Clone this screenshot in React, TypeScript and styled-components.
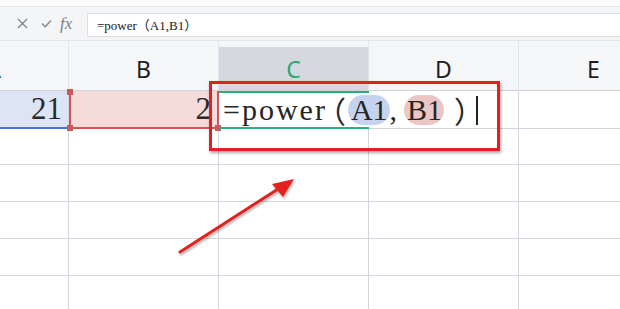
import React from 'react';
import styled, { createGlobalStyle } from 'styled-components';

const GlobalStyle = createGlobalStyle`
    body {
        margin: 0;
        background: #ffffff;
        font-family: "Noto Sans", "Liberation Sans", sans-serif;
    }
`;

const Page = styled.div`
    position: relative;
    width: 620px;
    height: 309px;
    overflow: hidden;
    background: #ffffff;
`;

const TopStrip = styled.div`
    height: 6px;
    background: #fbfbfc;
    border-bottom: 1px solid #e6e8eb;
`;

const FormulaBar = styled.div`
    display: flex;
    align-items: center;
    height: 33px;
    background: #f4f5f7;
    padding-left: 10px;
    box-sizing: border-box;
`;

const BarIcon = styled.span`
    display: flex;
    width: 24px;
    justify-content: center;
    color: #8a8d93;
`;

const FxLabel = styled.span`
    width: 20px;
    margin-left: 2px;
    font-family: "Liberation Serif", serif;
    font-style: italic;
    font-size: 17px;
    color: #7d8087;
`;

const FormulaInput = styled.div`
    flex: 1;
    height: 22px;
    margin-left: 7px;
    margin-top: 2px;
    background: #ffffff;
    border: 1px solid #dcdfe4;
    border-right: none;
    padding-left: 9px;
    display: flex;
    align-items: center;
    font-family: "Liberation Serif", "Noto Sans CJK SC", serif;
    font-size: 13px;
    color: #222;
`;

const Sheet = styled.div`
    display: grid;
    grid-template-columns: repeat(5, 150px);
    grid-template-rows: 51px 38px 36px 37px 37px 37px 37px;
    margin-left: -81px;
`;

const HeaderCell = styled.div<{ $active?: boolean }>`
    display: flex;
    align-items: center;
    justify-content: center;
    padding-top: 6px;
    box-sizing: border-box;
    font-size: 23px;
    color: ${p => (p.$active ? '#2aa873' : '#1d1d1f')};
    background: ${p =>
        p.$active
            ? 'linear-gradient(#f5f6f8 0 6px, #d5d8de 6px)'
            : '#f5f6f8'};
    border-top: 1px solid #e3e5e9;
    border-bottom: 1px solid #cfd2d8;
    border-right: 1px solid #e3e5ea;
`;

const Cell = styled.div`
    border-right: 1px solid #d3d6dc;
    border-bottom: 1px solid #d3d6dc;
    box-sizing: border-box;
`;

const ValueCell = styled.div<{ $tone: 'blue' | 'red' }>`
    position: relative;
    display: flex;
    align-items: center;
    justify-content: flex-end;
    padding-right: 6px;
    box-sizing: border-box;
    font-family: "Liberation Serif", serif;
    font-size: 31px;
    color: #2a2a2a;
    background: ${p => (p.$tone === 'blue' ? '#dde4f3' : '#f5dcdb')};
    border-bottom: 2px solid ${p => (p.$tone === 'blue' ? '#4b73cf' : '#cf5656')};
    border-left: ${p => (p.$tone === 'red' ? '2px solid #cf5656' : 'none')};
    border-right: ${p => (p.$tone === 'red' ? '2px solid #cf5656' : '1px solid #d3d6dc')};
`;

const Handle = styled.span<{ $side: 'left' | 'right'; $top?: boolean }>`
    position: absolute;
    width: 6px;
    height: 6px;
    background: #c85a5a;
    ${p => (p.$side === 'left' ? 'left: -4px;' : 'right: -4px;')}
    ${p => (p.$top ? 'top: -2px;' : 'bottom: -4px;')}
`;

const EditCell = styled.div`
    position: relative;
    border-top: 2px solid #2fae7c;
    border-bottom: 2px solid #2fae7c;
    box-sizing: border-box;
    overflow: visible;
    z-index: 2;
`;

const FormulaText = styled.div`
    position: absolute;
    left: 4px;
    top: 1px;
    display: flex;
    align-items: center;
    height: 32px;
    white-space: nowrap;
    font-family: "Liberation Serif", "Noto Sans CJK SC", serif;
    font-size: 30px;
    letter-spacing: 2px;
    color: #262626;
`;

/* full-width bracket, clipped to the part of its em box that holds the stroke */
const Paren = styled.span<{ $w: number; $open?: boolean; $pad: number }>`
    display: inline-flex;
    width: ${p => p.$w}px;
    overflow: hidden;
    box-sizing: border-box;
    letter-spacing: 0;
    justify-content: ${p => (p.$open ? 'flex-end' : 'flex-start')};
    ${p => (p.$open ? `padding-right: ${p.$pad}px;` : `padding-left: ${p.$pad}px;`)}
`;

const Ref = styled.span<{ $tone: 'blue' | 'red' }>`
    display: inline-flex;
    align-items: center;
    height: 30px;
    padding: 0 2px 0 3px;
    border-radius: 15px;
    letter-spacing: 0;
    background: ${p => (p.$tone === 'blue' ? '#c6d3ef' : '#ecc6c4')};
`;

const Gap = styled.span<{ $w: number }>`
    display: inline-block;
    width: ${p => p.$w}px;
`;

const Caret = styled.span`
    display: inline-block;
    width: 1.5px;
    height: 29px;
    background: #222;
`;

const Highlight = styled.div`
    position: absolute;
    left: 209px;
    top: 81px;
    width: 291px;
    height: 70px;
    box-sizing: border-box;
    border: 3px solid #e2201f;
    box-shadow: 1px 2px 3px rgba(0, 0, 0, 0.35);
    z-index: 5;
`;

const Arrow = styled.svg`
    position: absolute;
    left: 0;
    top: 0;
    z-index: 5;
`;

const columns = ['A', 'B', 'C', 'D', 'E'];

function App() {
    const emptyRows = [0, 1, 2, 3, 4];
    return (
        <Page>
            <GlobalStyle />
            <TopStrip />
            <FormulaBar>
                <BarIcon>
                    <svg width="11" height="11" viewBox="0 0 11 11">
                        <path d="M1 1 L10 10 M10 1 L1 10" stroke="#7f838a" strokeWidth="1.3" />
                    </svg>
                </BarIcon>
                <BarIcon>
                    <svg width="11" height="9" viewBox="0 0 11 9">
                        <path d="M1 4.5 L4.2 7.8 L10 1.5" stroke="#7f838a" strokeWidth="1.3" fill="none" />
                    </svg>
                </BarIcon>
                <FxLabel>fx</FxLabel>
                <FormulaInput>=power（A1,B1）</FormulaInput>
            </FormulaBar>
            <Sheet>
                {columns.map(c => (
                    <HeaderCell key={c} $active={c === 'C'}>{c}</HeaderCell>
                ))}
                <ValueCell $tone="blue">21</ValueCell>
                <ValueCell $tone="red">
                    2
                    <Handle $side="left" $top />
                    <Handle $side="left" />
                    <Handle $side="right" />
                </ValueCell>
                <EditCell>
                    <FormulaText>
                        =power<Paren $w={21} $open $pad={2}>（</Paren>
                        <Ref $tone="blue">A1</Ref>,<Gap $w={5} />
                        <Ref $tone="red">B1</Ref>
                        <Paren $w={32} $pad={10}>）</Paren>
                        <Caret />
                    </FormulaText>
                </EditCell>
                <Cell />
                <Cell />
                {emptyRows.map(r =>
                    columns.map(c => <Cell key={`${c}${r}`} />)
                )}
            </Sheet>
            <Highlight />
            <Arrow width="620" height="309">
                <defs>
                    <filter id="sh" x="-10%" y="-10%" width="130%" height="130%">
                        <feDropShadow dx="1" dy="2" stdDeviation="1.2" floodColor="#000" floodOpacity="0.3" />
                    </filter>
                </defs>
                <g filter="url(#sh)">
                    <line x1="180" y1="252" x2="278" y2="189" stroke="#e2201f" strokeWidth="3" strokeLinecap="round" />
                    <polygon points="294,179 272,184 283,197" fill="#e2201f" />
                </g>
            </Arrow>
        </Page>
    );
}

export default App;
